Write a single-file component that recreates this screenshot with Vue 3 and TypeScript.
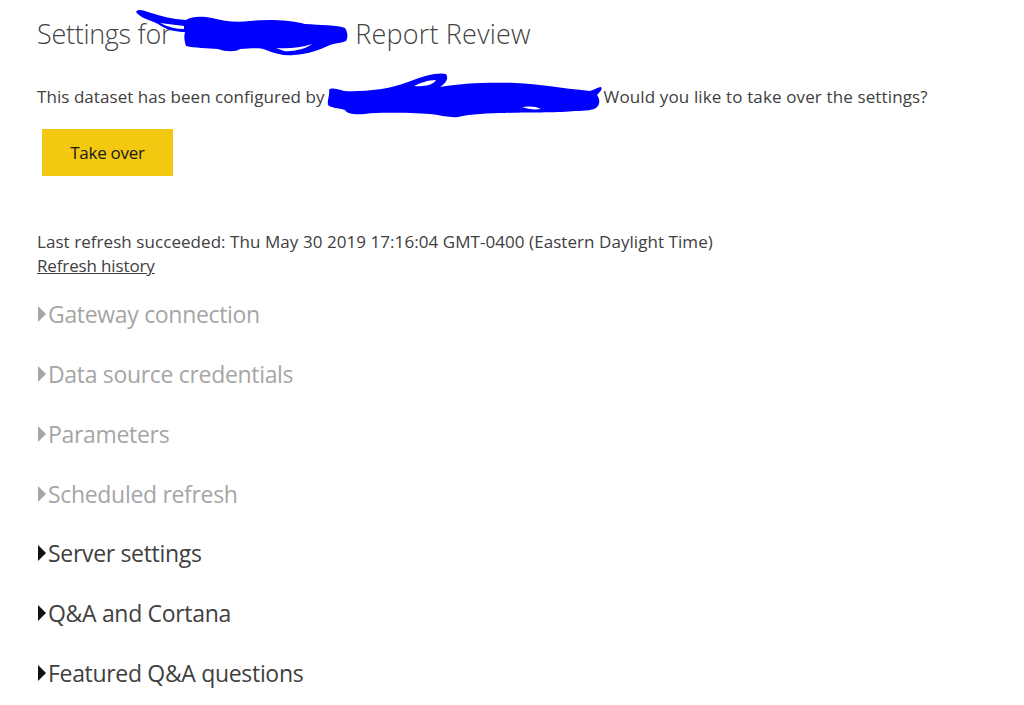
<script setup lang="ts">
const disabledSections: string[] = ['Gateway connection', 'Data source credentials', 'Parameters', 'Scheduled refresh']
const enabledSections: string[] = ['Server settings', 'Q&A and Cortana', 'Featured Q&A questions']
</script>

<template>
  <main class="page">
    <h1 class="title">
      <span>Settings for</span><span class="title-gap"></span><span class="title-end">Report Review</span>
    </h1>
    <p class="owner">
      <span>This dataset has been configured by</span><span class="owner-gap"></span><span class="owner-end">Would you like to take over the settings?</span>
    </p>
    <button class="take-over" type="button">Take over</button>
    <p class="refresh">Last refresh succeeded: Thu May 30 2019 17:16:04 GMT-0400 (Eastern Daylight Time)</p>
    <a class="history">Refresh history</a>
    <section class="sections">
      <div v-for="s in disabledSections" :key="s" class="section disabled">
        <span class="caret"></span><span>{{ s }}</span>
      </div>
      <div v-for="s in enabledSections" :key="s" class="section">
        <span class="caret"></span><span>{{ s }}</span>
      </div>
    </section>

    <svg class="scribble" width="1024" height="130" viewBox="0 0 1024 130">
      <path fill="#0000ff" d="M136 12 C138 9 142 10 148 12 C160 16 172 19 186 20 C192 16 202 16 212 18 C224 21 236 23 250 21 C268 19 290 20 305 24 C320 25 338 25 345 28 C348 32 348 38 346 41 C342 43 336 43 330 45 C320 50 308 54 294 55 C284 56 276 54 266 50 C258 47 250 49 240 49 C236 52 226 52 218 49 C208 48 194 48 186 46 C184 40 184 36 185 32 C176 32 166 30 158 24 C150 20 140 18 136 12 Z" />
      <path fill="#ffffff" d="M160 23 C168 24 176 25 184 26 L184 29 C176 29 168 27 160 23 Z" />
      <path fill="#ffffff" d="M276 48 C288 49 300 48 312 44 C306 49 292 52 284 51 Z" />
      <path fill="#0000ff" d="M329 90 C331 87 337 89 344 91 C360 92 388 90 408 82 C424 75 440 72 446 74 C449 78 446 83 440 87 C460 83 490 82 515 83 C540 84 560 88 590 91 C594 90 598 87 601 87 C603 89 600 92 597 95 C600 99 600 104 597 107 C595 110 585 111 575 111 C560 113 530 112 505 113 C490 113 470 114 458 117 C450 118 440 115 430 114 C410 113 380 112 365 114 C355 115 347 114 345 110 C338 108 331 108 328 105 C327 100 330 95 329 90 Z" />
      <path fill="#ffffff" d="M414 86 C420 83 428 80 436 80 C434 84 426 87 414 86 Z" />
      <path fill="#ffffff" d="M522 107 C528 106 536 106 541 109 C534 110 528 109 522 107 Z" />
    </svg>
  </main>
</template>

<style>
body {
  background: #ffffff;
}
</style>

<style scoped>
.page {
  position: relative;
  width: 1024px;
  height: 705px;
  overflow: hidden;
  box-sizing: border-box;
  padding: 14px 0 0 37px;
  background: #ffffff;
  font-family: "Open Sans", "Liberation Sans", sans-serif;
  color: #404040;
}
.title {
  display: flex;
  margin: 0;
  font-size: 27px;
  line-height: 40px;
  font-weight: 300;
  color: #444444;
  letter-spacing: -0.3px;
  white-space: nowrap;
}
.title-gap {
  width: 184px;
}
.title-end {
  letter-spacing: 0.2px;
}
.owner {
  display: flex;
  margin: 31px 0 0;
  font-size: 17px;
  line-height: 24px;
  white-space: nowrap;
  letter-spacing: 0.06px;
}
.owner-gap {
  width: 279px;
}
.owner-end {
  letter-spacing: 0.13px;
}
.take-over {
  display: block;
  width: 131px;
  height: 47px;
  margin: 20px 0 0 5px;
  padding: 0;
  border: 0;
  background: #f2c811;
  color: #1a1a1a;
  font: inherit;
  font-size: 17px;
  letter-spacing: -0.25px;
}
.refresh {
  margin: 54px 0 0;
  font-size: 17px;
  line-height: 24px;
  white-space: nowrap;
  letter-spacing: 0.06px;
}
.history {
  display: block;
  font-size: 17px;
  line-height: 24px;
  text-decoration: underline;
  letter-spacing: -0.14px;
}
.sections {
  display: flex;
  flex-direction: column;
  margin-top: 6.6px;
}
.section {
  display: flex;
  align-items: center;
  height: 59.7px;
  font-size: 23px;
  letter-spacing: -0.32px;
  color: #404040;
  white-space: nowrap;
}
.section.disabled {
  color: #a6a6a6;
}
.caret {
  flex: none;
  width: 0;
  height: 0;
  margin: 0 2px 0 1px;
  border-style: solid;
  border-width: 8px 0 8px 8px;
  border-color: transparent transparent transparent #111111;
}
.section.disabled .caret {
  border-left-color: #a6a6a6;
}
.scribble {
  position: absolute;
  top: 0;
  left: 0;
  pointer-events: none;
}
</style>
